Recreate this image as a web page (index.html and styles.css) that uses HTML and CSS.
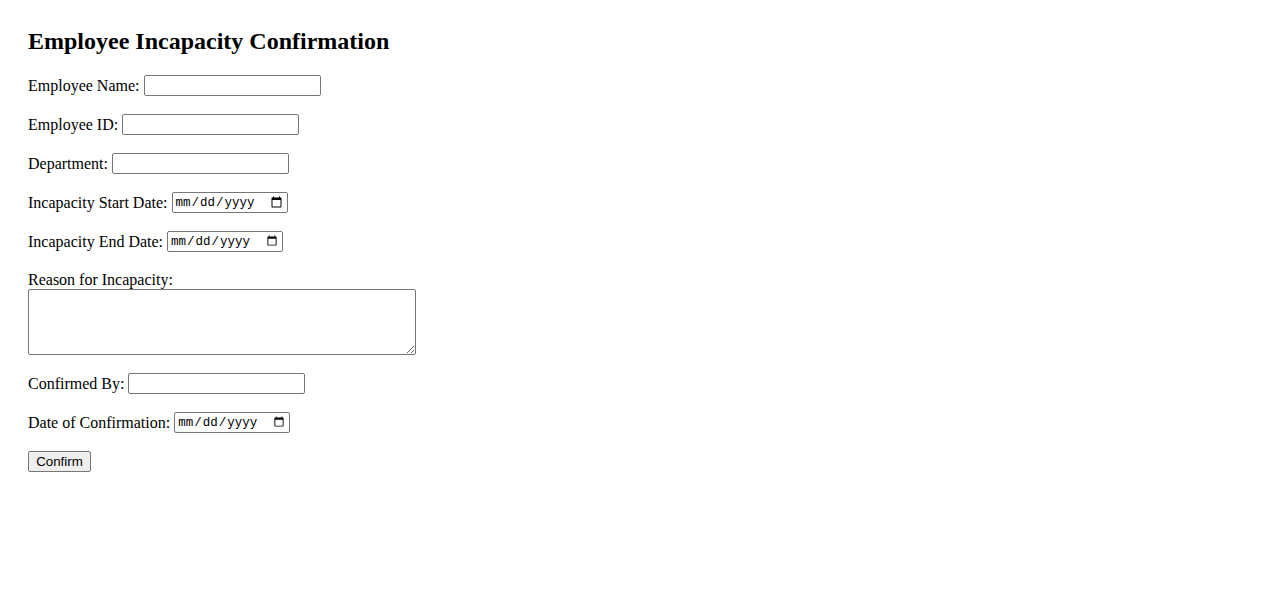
FILE: index.html
```html
<!DOCTYPE html>
<html lang="en">
  <head>
    <meta charset="UTF-8" />
    <meta name="viewport" content="width=device-width, initial-scale=1.0" />
    <title>Employee Incapacity Confirmation</title>
    <link rel="stylesheet" href="styles.css">
  </head>
  <body>
    <h2 class="title">Employee Incapacity Confirmation</h2>
    <form class="form">
      <div class="field">
        <label for="name">Employee Name:</label>
        <input type="text" id="name" class="text-input" />
      </div>
      <div class="field">
        <label for="empId">Employee ID:</label>
        <input type="text" id="empId" class="text-input" />
      </div>
      <div class="field">
        <label for="dept">Department:</label>
        <input type="text" id="dept" class="text-input" />
      </div>
      <div class="field">
        <label for="start">Incapacity Start Date:</label>
        <input type="date" id="start" class="date-input" />
      </div>
      <div class="field">
        <label for="end">Incapacity End Date:</label>
        <input type="date" id="end" class="date-input" />
      </div>
      <div class="field field-stack">
        <label for="reason">Reason for Incapacity:</label>
        <textarea id="reason" class="reason"></textarea>
      </div>
      <div class="field">
        <label for="confirmedBy">Confirmed By:</label>
        <input type="text" id="confirmedBy" class="text-input" />
      </div>
      <div class="field">
        <label for="confirmDate">Date of Confirmation:</label>
        <input type="date" id="confirmDate" class="date-input" />
      </div>
      <div class="field">
        <button type="submit" class="confirm-btn">Confirm</button>
      </div>
    </form>
  </body>
</html>
```

FILE: styles.css
```css
html,
body {
  background: #fff;
}
body {
  margin: 0;
  padding: 28px 28px;
  font-family: "Liberation Serif", "Times New Roman", serif;
  font-size: 16px;
  color: #000;
}
.title {
  margin: 0 0 20px;
  font-size: 24px;
  font-weight: bold;
}
.form {
  display: flex;
  flex-direction: column;
  gap: 18px;
}
.field {
  display: flex;
  align-items: center;
  gap: 4px;
  height: 21px;
}
.field-stack {
  flex-direction: column;
  align-items: flex-start;
  gap: 0;
  height: auto;
}
.field-stack label {
  line-height: 19px;
}
.text-input,
.date-input,
.reason {
  box-sizing: border-box;
  margin: 0;
  border: 1px solid #767676;
  border-radius: 2px;
  background: #fff;
}
.text-input {
  width: 177px;
  height: 21px;
  padding: 1px 2px;
  font-family: "Liberation Sans", Arial, sans-serif;
  font-size: 13.33px;
}
.date-input {
  width: 116px;
  height: 21px;
  padding: 1px 2px;
  font-family: "Liberation Mono", "DejaVu Sans Mono", monospace;
  font-size: 12.5px;
  color: #000;
}
.reason {
  width: 388px;
  height: 66px;
  padding: 2px;
  font-family: "Liberation Mono", monospace;
  font-size: 13.33px;
  resize: both;
}
.confirm-btn {
  box-sizing: border-box;
  width: 63px;
  height: 21px;
  margin: 0;
  padding: 1px 6px;
  font-family: "Liberation Sans", Arial, sans-serif;
  font-size: 13.33px;
  color: #000;
  background: #efefef;
  border: 1px solid #767676;
  border-radius: 2px;
}
```
